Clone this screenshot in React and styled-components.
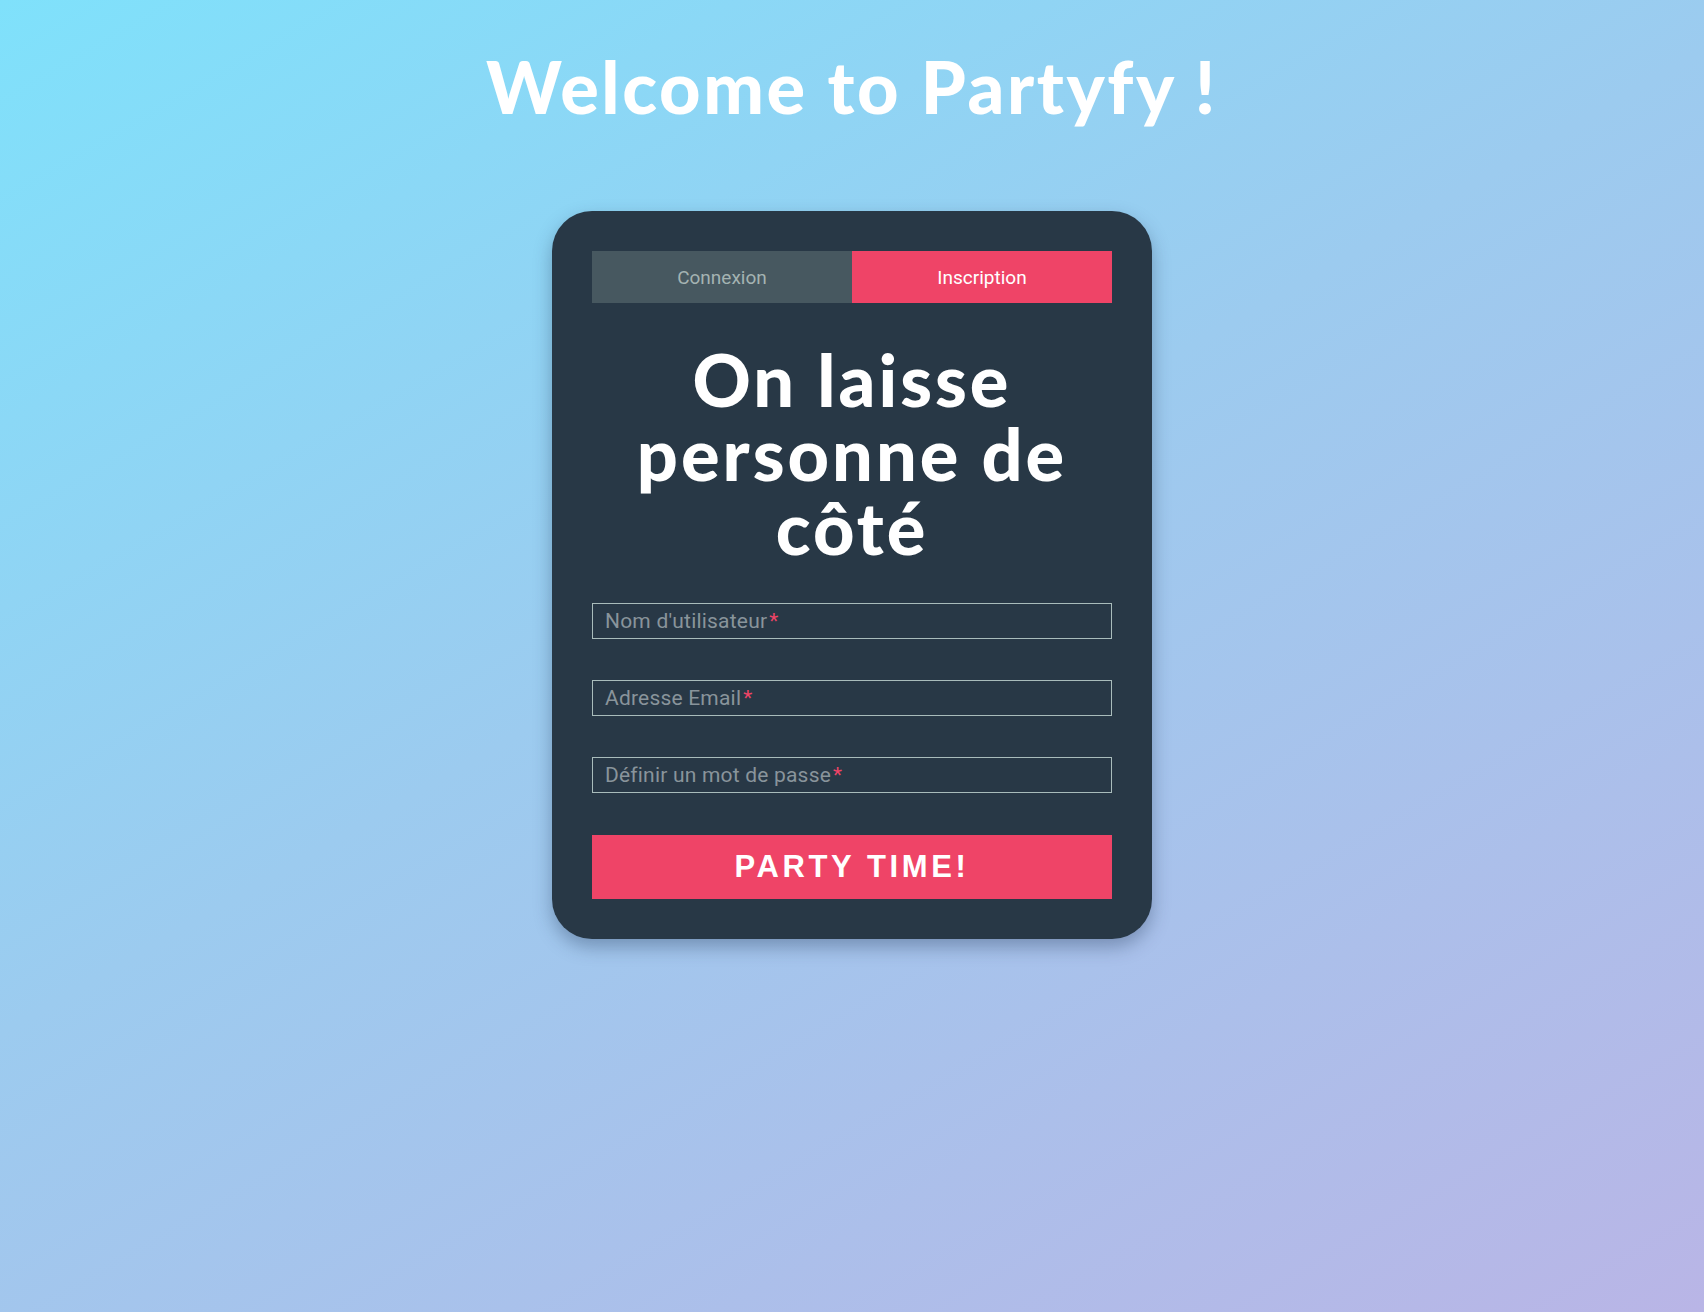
import React from "react";
import styled, { createGlobalStyle } from "styled-components";

const Global = createGlobalStyle`
  html, body { margin: 0; padding: 0; }
  body {
    min-height: 100vh;
    background: linear-gradient(150deg, #7fe1fb 0%, #9ccbef 45%, #b9b5e6 100%);
    background-attachment: fixed;
    font-family: "Lato", "DejaVu Sans", sans-serif;
    overflow: hidden;
  }
  * { box-sizing: border-box; }
`;

const Page = styled.div`
  min-height: 100vh;
  display: flex;
  flex-direction: column;
  align-items: center;
  padding-top: 43px;
`;

const Title = styled.h1`
  margin: 0;
  font-family: "Lato", sans-serif;
  font-weight: 900;
  font-size: 72px;
  line-height: 86px;
  color: #ffffff;
  letter-spacing: 2.6px;
`;

const Card = styled.div`
  margin-top: 82px;
  width: 600px;
  padding: 40px;
  background: #283846;
  border-radius: 40px;
  box-shadow: 0 8px 18px rgba(30, 50, 80, 0.35);
  display: flex;
  flex-direction: column;
`;

const Tabs = styled.div`
  display: grid;
  grid-template-columns: 1fr 1fr;
  height: 52px;
`;

const Tab = styled.button`
  border: none;
  margin: 0;
  padding: 0;
  font-family: "Roboto", "Open Sans", sans-serif;
  font-size: 19px;
  cursor: pointer;
  background: ${(p) => (p.$active ? "#ef4467" : "#475860")};
  color: ${(p) => (p.$active ? "#ffffff" : "#a4b3b2")};
`;

const Heading = styled.h2`
  margin: 39px 0 0;
  text-align: center;
  font-family: "Lato", sans-serif;
  font-weight: 900;
  font-size: 72px;
  line-height: 74px;
  letter-spacing: 3px;
  color: #ffffff;
`;

const Form = styled.form`
  margin-top: 39px;
  display: flex;
  flex-direction: column;
  gap: 41px;
`;

const Field = styled.div`
  position: relative;
  height: 36px;
`;

const Input = styled.input`
  width: 100%;
  height: 36px;
  border: 1px solid #a9bcbb;
  background: transparent;
  color: #ffffff;
  padding: 0 12px;
  font-family: "Roboto", sans-serif;
  font-size: 21px;
  outline: none;
`;

const Placeholder = styled.label`
  position: absolute;
  left: 13px;
  top: 50%;
  transform: translateY(-50%);
  pointer-events: none;
  font-family: "Roboto", sans-serif;
  font-size: 21px;
  letter-spacing: 0.2px;
  color: #89949b;
  white-space: nowrap;
`;

const Star = styled.span`
  color: #ef4467;
  margin-left: 2px;
`;

const Submit = styled.button`
  margin-top: 1px;
  height: 64px;
  border: none;
  background: #ef4467;
  color: #ffffff;
  font-family: "Liberation Sans", Arial, sans-serif;
  font-weight: 700;
  font-size: 31px;
  letter-spacing: 3.6px;
  cursor: pointer;
`;

const fields = [
  { id: "user", label: "Nom d'utilisateur", type: "text" },
  { id: "email", label: "Adresse Email", type: "email" },
  { id: "pass", label: "Définir un mot de passe", type: "password" },
];

export default function App() {
  return (
    <>
      <Global />
      <Page>
        <Title>Welcome to Partyfy !</Title>
        <Card>
          <Tabs>
            <Tab>Connexion</Tab>
            <Tab $active>Inscription</Tab>
          </Tabs>
          <Heading>
            On laisse
            <br />
            personne de
            <br />
            côté
          </Heading>
          <Form onSubmit={(e) => e.preventDefault()}>
            {fields.map((f) => (
              <Field key={f.id}>
                <Input id={f.id} type={f.type} />
                <Placeholder htmlFor={f.id}>
                  {f.label}
                  <Star>*</Star>
                </Placeholder>
              </Field>
            ))}
            <Submit type="submit">PARTY TIME!</Submit>
          </Form>
        </Card>
      </Page>
    </>
  );
}
